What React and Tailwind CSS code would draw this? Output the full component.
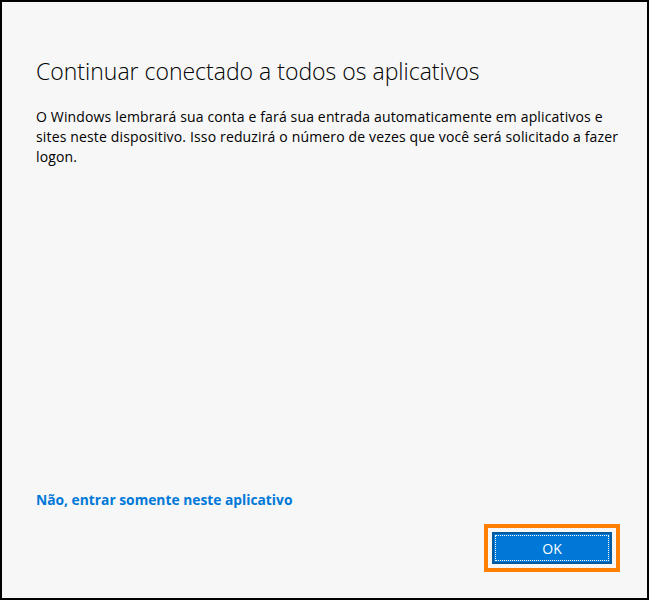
import React from 'react';

const App = () => {
  return (
    <div
      className="w-[649px] h-[600px] border-2 border-black bg-[#f7f7f7] flex flex-col text-black"
      style={{ fontFamily: '"Open Sans", "Noto Sans", sans-serif' }}
    >
      <div className="pl-[34px] pr-[20px] pt-[53px]">
        <h1 className="text-[23px] font-light leading-[32px]">
          Continuar conectado a todos os aplicativos
        </h1>
        <p className="mt-[20px] whitespace-nowrap text-[14px] leading-[20px] tracking-[0.15px]">
          O Windows lembrará sua conta e fará sua entrada automaticamente em aplicativos e
          <br />
          sites neste dispositivo. Isso reduzirá o número de vezes que você será solicitado a fazer
          <br />
          logon.
        </p>
      </div>

      <div className="flex-1" />

      <div className="pl-[34px]">
        <a href="#" className="text-[13.8px] font-bold leading-[20px] text-[#0078d7]">
          Não, entrar somente neste aplicativo
        </a>
      </div>

      <div className="flex justify-end pr-[27px] pt-[13px] pb-[26px]">
        <div className="border-4 border-[#ff8000] p-[4px]">
          <button className="w-[120px] h-[32px] border-2 border-[#005a9e] bg-[#0078d7] p-px">
            <span className="flex h-full w-full items-center justify-center border border-dotted border-white text-[14px] text-white">
              OK
            </span>
          </button>
        </div>
      </div>
    </div>
  );
};

export default App;
